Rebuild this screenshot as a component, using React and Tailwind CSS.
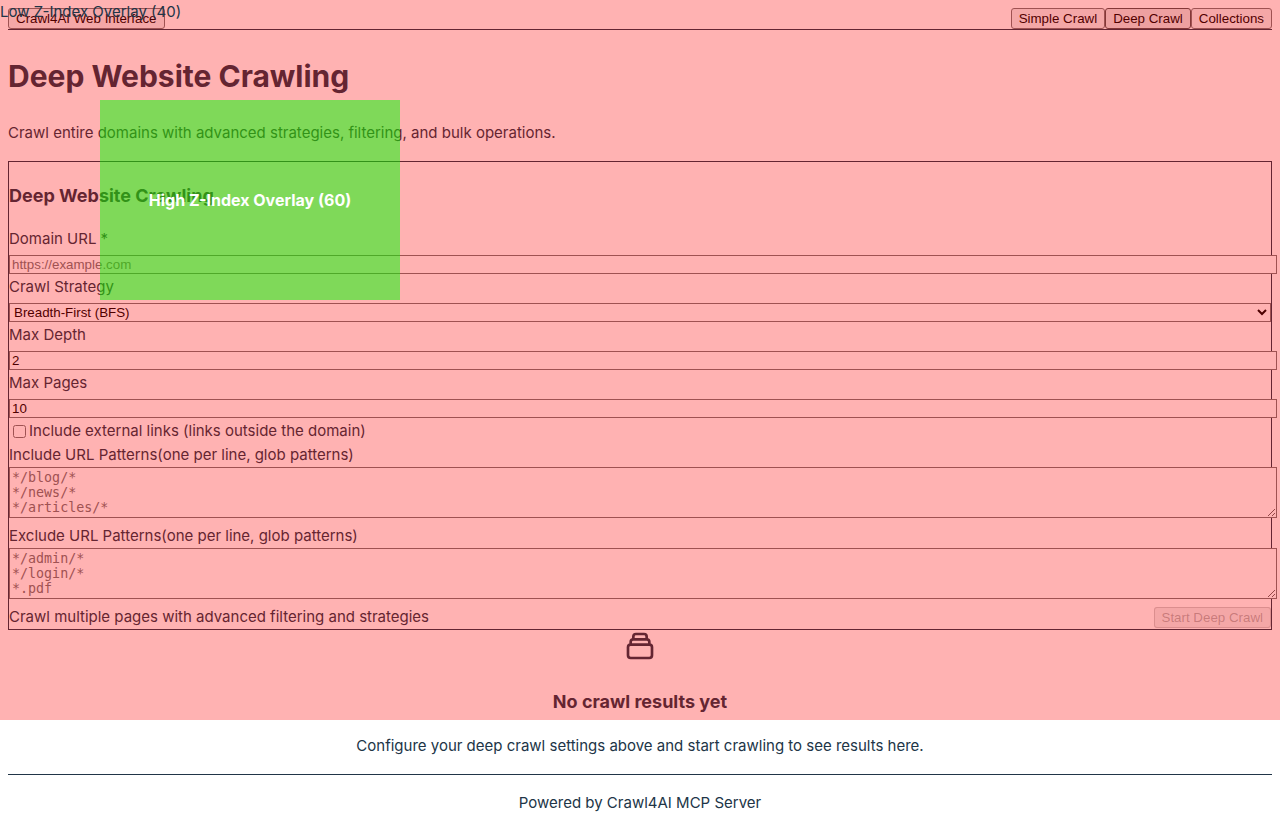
import React from 'react';

const navButton =
  'rounded-[3px] border px-[7px] py-[2px] font-["Liberation_Sans",sans-serif] [font-size:smaller] leading-[15px] text-black';
const idle = 'border-[#767676] bg-[#efefef]';
const current = 'border-[#4f4f4f] bg-[#e5e5e5]';

const body = 'text-[15px] leading-6';
const subheading = 'text-[18px] leading-7 font-bold';

const control =
  'block border border-[#767676] bg-white font-["Liberation_Sans",sans-serif] [font-size:smaller] leading-[15px] text-black';
const textControl = 'box-content h-[15px] w-full px-[2px] py-px placeholder:text-[#757575]';
const areaControl =
  'mb-[6px] block box-content h-[45px] w-full resize border border-[#767676] bg-white p-[2px] font-["DejaVu_Sans_Mono",monospace] [font-size:smaller] leading-[15px] text-black placeholder:text-[#757575]';

function Field({ id, label, children }) {
  return (
    <div>
      <label htmlFor={id} className={`block ${body}`}>{label}</label>
      <div className="pt-[4px] pb-px">{children}</div>
    </div>
  );
}

function PatternField({ id, label, placeholder }) {
  return (
    <div>
      <label htmlFor={id} className={`block ${body}`}>
        {label}
        <span>(one per line, glob patterns)</span>
      </label>
      <textarea id={id} rows={3} placeholder={placeholder} className={areaControl} />
    </div>
  );
}

function StackIcon() {
  return (
    <svg
      className="mx-auto block size-8"
      viewBox="0 0 24 24"
      fill="none"
      stroke="currentColor"
      strokeWidth="2"
      strokeLinecap="round"
      strokeLinejoin="round"
      aria-hidden="true"
    >
      <path d="M19 11H5m14 0a2 2 0 012 2v6a2 2 0 01-2 2H5a2 2 0 01-2-2v-6a2 2 0 012-2m14 0V9a2 2 0 00-2-2M5 11V9a2 2 0 012-2m0 0V5a2 2 0 012-2h6a2 2 0 012 2v2M7 7h10" />
    </svg>
  );
}

export default function App() {
  return (
    <div className='relative overflow-x-hidden bg-white px-2 pt-2 pb-4 font-["Inter",sans-serif] text-base leading-6 text-[#213547]'>
      <nav className="flex justify-between border-b border-[#213547]">
        <button type="button" className={`${navButton} ${idle}`}>Crawl4AI Web Interface</button>
        <div className="flex">
          <button type="button" className={`${navButton} ${idle}`}>Simple Crawl</button>
          <button type="button" className={`${navButton} ${current}`}>Deep Crawl</button>
          <button type="button" className={`${navButton} ${idle}`}>Collections</button>
        </div>
      </nav>

      <main>
        <h1 className="mt-[22px] mb-[21px] text-[30px] leading-[48px] font-bold">Deep Website Crawling</h1>
        <p className={`mb-4 ${body}`}>
          Crawl entire domains with advanced strategies, filtering, and bulk operations.
        </p>

        <form className="border border-[#213547]" onSubmit={(e) => e.preventDefault()}>
          <h3 className={`mt-5 mb-[17px] ${subheading}`}>Deep Website Crawling</h3>

          <Field id="domain" label="Domain URL *">
            <input id="domain" type="url" placeholder="https://example.com" className={`${control} ${textControl}`} />
          </Field>
          <Field id="strategy" label="Crawl Strategy">
            <select id="strategy" defaultValue="bfs" className={`${control} h-[19px] w-full`}>
              <option value="bfs">Breadth-First (BFS)</option>
              <option value="dfs">Depth-First (DFS)</option>
              <option value="best">Best-First</option>
            </select>
          </Field>
          <Field id="depth" label="Max Depth">
            <input id="depth" type="number" defaultValue="2" className={`${control} ${textControl}`} />
          </Field>
          <Field id="pages" label="Max Pages">
            <input id="pages" type="number" defaultValue="10" className={`${control} ${textControl}`} />
          </Field>

          <label className={`flex items-center ${body}`}>
            <input type="checkbox" className="mr-[3px] ml-1 size-[13px]" />
            <span>Include external links (links outside the domain)</span>
          </label>

          <PatternField id="include" label="Include URL Patterns" placeholder={'*/blog/*\n*/news/*\n*/articles/*'} />
          <PatternField id="exclude" label="Exclude URL Patterns" placeholder={'*/admin/*\n*/login/*\n*.pdf'} />

          <div className="flex items-end justify-between">
            <span className={body}>Crawl multiple pages with advanced filtering and strategies</span>
            <div className="flex pb-px">
              <button
                type="submit"
                disabled
                className='rounded-[3px] border border-[#767676]/30 bg-[#efefef] px-[7px] py-[2px] font-["Liberation_Sans",sans-serif] [font-size:smaller] leading-[15px] text-[#101010]/30'
              >
                Start Deep Crawl
              </button>
            </div>
          </div>
        </form>

        <section className="text-center">
          <StackIcon />
          <h3 className={`mt-[26px] mb-[18px] ${subheading}`}>No crawl results yet</h3>
          <p className={`mb-4 ${body}`}>
            Configure your deep crawl settings above and start crawling to see results here.
          </p>
        </section>
      </main>

      <footer className="border-t border-[#213547] pt-4 text-center">
        <p className={body}>Powered by Crawl4AI MCP Server</p>
      </footer>

      <div className={`pointer-events-none absolute top-0 left-0 z-40 h-[720px] w-full bg-[#ff0000]/30 ${body}`}>
        Low Z-Index Overlay (40)
      </div>
      <div className="pointer-events-none absolute top-[100px] left-[100px] z-60 flex h-[200px] w-[300px] items-center justify-center bg-[#00ff00]/50 font-bold text-white">
        High Z-Index Overlay (60)
      </div>
    </div>
  );
}
